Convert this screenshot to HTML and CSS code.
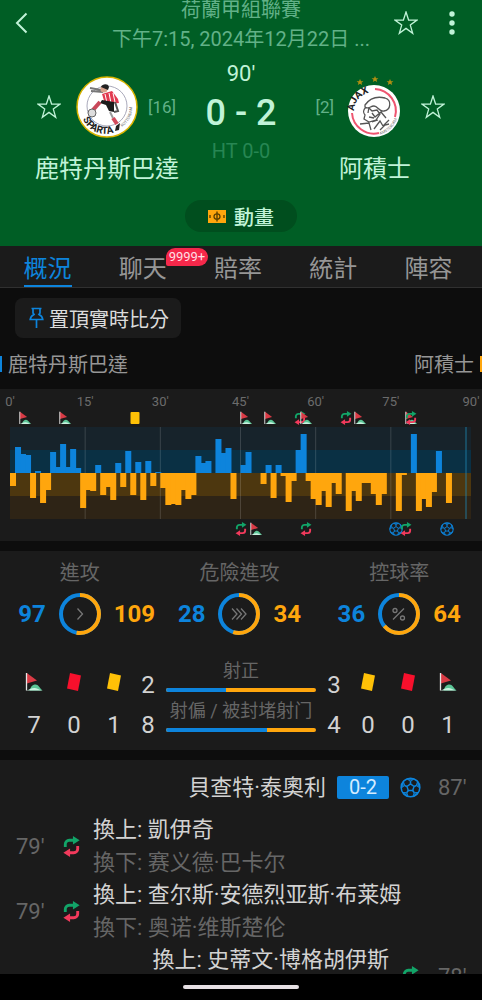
FILE: index.html
```html
<!DOCTYPE html>
<html lang="zh-Hant">
<head>
  <meta charset="UTF-8" />
  <meta name="viewport" content="width=device-width, initial-scale=1.0">
  <title>鹿特丹斯巴達 0 - 2 阿積士</title>
  <link rel="stylesheet" href="styles.css">
</head>
<body>

  <!-- shared icons -->
  <svg class="sprite" aria-hidden="true">
    <symbol id="star" viewBox="0 0 24 24">
      <path d="M12 1l2.600 8 8.400.1-6.700 5 2.400 8.200-6.700-4.900-6.700 4.900 2.400-8.200-6.700-5L9.400 9z" fill="none" stroke="currentColor" stroke-width="1.300"/>
    </symbol>
    <symbol id="corner" viewBox="0 0 18 20">
      <path d="M4.500 18.500C6 14 8 12.500 10.500 12.500c3 0 4 3.500 7 6z" fill="#5cc596"/>
      <path d="M1 18.500c3-.5 6-3 9-2.500s4 2 7.500 2.500z" fill="#c9f2e0"/>
      <path d="M1.800 1L12 8.500 1.800 11.500z" fill="#d93a45"/>
      <path d="M1.500 1v17.500" stroke="#e6e6e6" stroke-width="1.300"/>
    </symbol>
    <symbol id="subst" viewBox="0 0 20 22">
      <path d="M3.500 11.500V8.500a4 4 0 0 1 4-4h6" fill="none" stroke="#12a468" stroke-width="3"/>
      <path d="M11.500 0l7 4.500-7 4.500z" fill="#12a468"/>
      <path d="M16.500 10.500v3a4 4 0 0 1-4 4h-6" fill="none" stroke="#f23a5c" stroke-width="3"/>
      <path d="M8.500 13l-7 4.500 7 4.500z" fill="#f23a5c"/>
    </symbol>
    <symbol id="card" viewBox="0 0 16 20">
      <path d="M4 1l11 2.500-3 15.500L1 16.500z" fill="currentColor"/>
    </symbol>
    <symbol id="ball" viewBox="0 0 22 22">
      <circle cx="11" cy="11" r="9.800" fill="none" stroke="#0d84dc" stroke-width="1.600"/>
      <path d="M11 7.200l3.700 2.700-1.400 4.300H8.700L7.300 9.900z" fill="none" stroke="#0d84dc" stroke-width="1.500"/>
      <path d="M11 7.200V4.500M14.700 9.900l2.600-.9M13.300 14.200l1.700 2.300M8.700 14.200L7 16.500M7.300 9.900L4.700 9" stroke="#0d84dc" stroke-width="1.600"/>
      <path d="M7.500 2L11 4.700 14.500 2zM18.500 4.500l-1.400 4.300 3.500 2.700zM19.300 16.200l-4.400.2-1.300 4zM8.400 20.400l-1.300-4-4.400-.2zM1.400 11.500l3.500-2.700-1.400-4.300z" fill="#0d84dc" fill-opacity=".6" stroke="#0d84dc" stroke-width="1"/>
    </symbol>
  </svg>

  <header class="match-header">
    <div class="top-bar">
      <button class="icon-btn" aria-label="返回">
        <svg width="24" height="24" viewBox="0 0 24 24"><path d="M16.500 2.500L7 12l9.500 9.500" fill="none" stroke="currentColor" stroke-width="2"/></svg>
      </button>
      <div class="league">
        <div>荷蘭甲組聯賽</div>
        <div>下午7:15, 2024年12月22日 ...</div>
      </div>
      <div class="top-actions">
        <button class="icon-btn" aria-label="收藏"><svg width="24" height="24"><use href="#star"/></svg></button>
        <button class="icon-btn" aria-label="更多">
          <svg width="24" height="24" viewBox="0 0 24 24" fill="currentColor"><circle cx="12" cy="3" r="2.700"/><circle cx="12" cy="12" r="2.700"/><circle cx="12" cy="21" r="2.700"/></svg>
        </button>
      </div>
    </div>

    <div class="scoreboard">
      <div class="team">
        <div class="team-row">
          <button class="icon-btn" aria-label="收藏主隊"><svg width="24" height="24"><use href="#star"/></svg></button>
          <svg class="logo" viewBox="0 0 62 62">
            <circle cx="31" cy="31" r="30" fill="#fff" stroke="#d9b400" stroke-width="1.500"/>
            <circle cx="31" cy="30" r="20" fill="none" stroke="#aab" stroke-width="1"/>
            <path d="M25 14L14 12M27 16l-12-1" stroke="#777" stroke-width="2" fill="none"/>
            <circle cx="28" cy="13" r="3.500" fill="#d9a38c"/>
            <path d="M25 11c1-3 7-4 8 0l-1 3z" fill="#222"/>
            <path d="M26 18l10-3 6 8 1 4-14 1z" fill="#e23a50"/>
            <path d="M29 18l2 9M33 17l2 10M37 17l2 9" stroke="#fff" stroke-width="1"/>
            <path d="M26 24l12 2v10l-5-1-3-6-6-2z" fill="#1b1b1b"/>
            <path d="M24 26l-7 8" stroke="#c9485a" stroke-width="4"/>
            <path d="M39 26l3 9-4 1" fill="none" stroke="#555" stroke-width="2"/>
            <circle cx="16" cy="37" r="4" fill="#ddd" stroke="#666" stroke-width="1"/>
            <path d="M34 36l3 6" stroke="#999" stroke-width="2"/>
            <path d="M37 42l4 6" stroke="#d24a5c" stroke-width="4"/>
            <path d="M40 50l4-3-1 7-4 1z" fill="#222"/>
            <path id="sparta-arc" d="M7 43c6 14 22 19 36 11" fill="none"/>
            <path id="rotterdam-arc" d="M46 51c8-6 11-14 10-22" fill="none"/>
            <text class="crest-name"><textPath href="#sparta-arc">SPARTA</textPath></text>
            <text class="crest-small"><textPath href="#rotterdam-arc">ROTTERDAM</textPath></text>
          </svg>
          <span class="rank">[16]</span>
        </div>
        <div class="team-name">鹿特丹斯巴達</div>
      </div>

      <div class="score">
        <div class="minute">90'</div>
        <div class="goals">0 - 2</div>
        <div class="half">HT 0-0</div>
      </div>

      <div class="team">
        <div class="team-row">
          <span class="rank">[2]</span>
          <svg class="logo" viewBox="0 0 62 62">
            <g fill="#b08f12">
              <path d="M16 3l1 2.200 2.400.1-1.900 1.500.7 2.300-2.200-1.300-2.200 1.300.7-2.300-1.900-1.500 2.400-.1z"/>
              <path d="M31 0l1 2.200 2.400.1-1.900 1.500.7 2.300L31 4.800l-2.200 1.300.7-2.300-1.900-1.500 2.400-.1z"/>
              <path d="M46 3l1 2.200 2.400.1-1.900 1.500.7 2.300-2.200-1.300-2.200 1.300.7-2.300-1.900-1.500 2.400-.1z"/>
            </g>
            <circle cx="30" cy="35" r="26" fill="#fff"/>
            <path d="M31 13a22 22 0 0 1 20 28M35 57A22 22 0 0 1 8 37" fill="none" stroke="#ee5570" stroke-width="2"/>
            <path d="M21 29c5-7 12-9 20-7 7 2 6 12-1 13-5 1-6-5-10-5s-6 4-9 1zM22 31c-3 3-3 6-1 8l-1 4 5 3 7-2 4-6-3-4-5 1-3-3M25 31l-1 6M28 37l3 4 6-5 5 6M16 48l9-1 2 7M30 53l6-8 3 5 6-6M28 46l6-2M36 54l5-5 4-1M25 41l5 1" fill="none" stroke="#555" stroke-width="1.300"/>
            <path id="ajax-arc" d="M10 35c0-9 7-18 20-19" fill="none"/>
            <path id="amsterdam-arc" d="M36 59c9-3 15-9 17-17" fill="none"/>
            <text class="crest-name"><textPath href="#ajax-arc">AJAX</textPath></text>
            <text class="crest-small"><textPath href="#amsterdam-arc">AMSTERDAM</textPath></text>
          </svg>
          <button class="icon-btn" aria-label="收藏客隊"><svg width="24" height="24"><use href="#star"/></svg></button>
        </div>
        <div class="team-name">阿積士</div>
      </div>
    </div>

    <button class="live-btn">
      <svg width="18" height="13" viewBox="0 0 18 13">
        <rect width="18" height="13" fill="#ffa60d"/>
        <path d="M9 1.500v10M2 5v3M16 5v3" fill="none" stroke="#5a4000" stroke-width="1.400"/>
        <ellipse cx="9" cy="6.500" rx="3" ry="2.700" fill="none" stroke="#5a4000" stroke-width="1.300"/>
      </svg>
      動畫
    </button>
  </header>

  <nav class="tabs">
    <a href="#overview" class="tab active">概況</a>
    <a href="#chat" class="tab">聊天<span class="badge">9999+</span></a>
    <a href="#odds" class="tab">賠率</a>
    <a href="#stats" class="tab">統計</a>
    <a href="#lineup" class="tab">陣容</a>
  </nav>

  <main class="content" id="overview">
    <button class="pin-btn">
      <svg width="15" height="22" viewBox="0 0 15 22"><path d="M2.500 1.500h10M4 1.500v4.500l1 1.500c-2 1-3.500 2.500-3.800 5h12.600c-.3-2.500-1.800-4-3.800-5l1-1.500V1.500M7.500 12.500V21" fill="none" stroke="#0d84dc" stroke-width="1.700"/></svg>
      置頂實時比分
    </button>

    <div class="sides">
      <span class="home">鹿特丹斯巴達</span>
      <span class="away">阿積士</span>
    </div>

    <section class="panel timeline">
      <div class="ticks">
        <span style="left: 0%">0'</span>
        <span style="left: 16.3%">15'</span>
        <span style="left: 32.6%">30'</span>
        <span style="left: 50%">45'</span>
        <span style="left: 66.3%">60'</span>
        <span style="left: 82.6%">75'</span>
        <span style="left: 100%">90'</span>
      </div>
      <div class="markers">
        <svg style="left: 3.3%"><use href="#corner"/></svg>
        <svg style="left: 11.9%"><use href="#corner"/></svg>
        <i class="mini-card" style="left: 27.2%"></i>
        <svg style="left: 51.2%"><use href="#corner"/></svg>
        <svg style="left: 56.5%"><use href="#corner"/></svg>
        <svg style="left: 63%"><use href="#subst"/></svg>
        <svg style="left: 64.2%"><use href="#corner"/></svg>
        <svg style="left: 72.9%"><use href="#subst"/></svg>
        <svg style="left: 76%"><use href="#corner"/></svg>
        <svg style="left: 87%"><use href="#corner"/></svg>
        <svg style="left: 87%"><use href="#subst"/></svg>
      </div>
      <svg class="chart" id="chart" viewBox="0 0 460 92" preserveAspectRatio="none">
        <rect width="460" height="23" fill="#17232b"/>
        <rect y="23" width="460" height="23" fill="#0a3044"/>
        <rect y="46" width="460" height="23" fill="#4d370f"/>
        <rect y="69" width="460" height="23" fill="#2e2416"/>
        <path d="M75 0v92M150 0v92M230 0v92M305 0v92M380 0v92" stroke="#fff" stroke-opacity=".15"/>
        <path d="M455 0v92" stroke="#1d86b4" stroke-opacity=".4" stroke-width="2"/>
      </svg>
      <div class="markers">
        <svg style="left: 50%"><use href="#subst"/></svg>
        <svg style="left: 53.3%"><use href="#corner"/></svg>
        <svg style="left: 64.2%"><use href="#subst"/></svg>
        <svg style="left: 83.8%"><use href="#ball"/></svg>
        <svg style="left: 86%"><use href="#subst"/></svg>
        <svg style="left: 94.7%"><use href="#ball"/></svg>
      </div>
    </section>

    <section class="panel stats">
      <div class="rings">
        <div class="ring-stat">
          <h3>進攻</h3>
          <b class="home-val">97</b>
          <svg class="ring" viewBox="0 0 42 42">
            <circle cx="21" cy="21" r="19" class="ring-home"/>
            <circle cx="21" cy="21" r="19" class="ring-away" pathLength="100" stroke-dasharray="53 47" transform="rotate(-90 21 21)"/>
            <path d="M18.500 15.500l5 5.500-5 5.500" class="ring-icon"/>
          </svg>
          <b class="away-val">109</b>
        </div>
        <div class="ring-stat">
          <h3>危險進攻</h3>
          <b class="home-val">28</b>
          <svg class="ring" viewBox="0 0 42 42">
            <circle cx="21" cy="21" r="19" class="ring-home"/>
            <circle cx="21" cy="21" r="19" class="ring-away" pathLength="100" stroke-dasharray="55 45" transform="rotate(-90 21 21)"/>
            <path d="M14 15.500l5 5.500-5 5.500M18.500 15.500l5 5.500-5 5.500M23 15.500l5 5.500-5 5.500" class="ring-icon"/>
          </svg>
          <b class="away-val">34</b>
        </div>
        <div class="ring-stat">
          <h3>控球率</h3>
          <b class="home-val">36</b>
          <svg class="ring" viewBox="0 0 42 42">
            <circle cx="21" cy="21" r="19" class="ring-home"/>
            <circle cx="21" cy="21" r="19" class="ring-away" pathLength="100" stroke-dasharray="64 36" transform="rotate(-90 21 21)"/>
            <path d="M26 15.500l-11 11" class="ring-icon"/>
            <circle cx="17" cy="17.500" r="2" class="ring-icon"/>
            <circle cx="24.500" cy="25" r="2" class="ring-icon"/>
          </svg>
          <b class="away-val">64</b>
        </div>
      </div>

      <div class="counts">
        <svg class="count-icon"><use href="#corner"/></svg>
        <svg class="count-icon red"><use href="#card"/></svg>
        <svg class="count-icon yellow"><use href="#card"/></svg>
        <span>2</span>
        <div class="shot">
          <div>射正</div>
          <div class="bar"><i style="width: 40%"></i></div>
        </div>
        <span>3</span>
        <svg class="count-icon yellow"><use href="#card"/></svg>
        <svg class="count-icon red"><use href="#card"/></svg>
        <svg class="count-icon"><use href="#corner"/></svg>

        <span>7</span>
        <span>0</span>
        <span>1</span>
        <span>8</span>
        <div class="shot">
          <div>射偏 / 被封堵射门</div>
          <div class="bar"><i style="width: 67%"></i></div>
        </div>
        <span>4</span>
        <span>0</span>
        <span>0</span>
        <span>1</span>
      </div>
    </section>

    <ul class="panel events">
      <li class="event goal away">
        <span class="names">貝查特·泰奧利</span>
        <span class="goal-score">0-2</span>
        <svg class="event-icon"><use href="#ball"/></svg>
        <time>87'</time>
      </li>
      <li class="event">
        <time>79'</time>
        <svg class="event-icon"><use href="#subst"/></svg>
        <div class="names"><span>換上: 凱伊奇</span><span class="off">換下: 赛义德·巴卡尔</span></div>
      </li>
      <li class="event">
        <time>79'</time>
        <svg class="event-icon"><use href="#subst"/></svg>
        <div class="names"><span>換上: 查尔斯·安德烈亚斯·布莱姆</span><span class="off">換下: 奥诺·维斯楚伦</span></div>
      </li>
      <li class="event away">
        <div class="names"><span>換上: 史蒂文·博格胡伊斯</span></div>
        <svg class="event-icon"><use href="#subst"/></svg>
        <time>78'</time>
      </li>
    </ul>
  </main>

  <footer class="system-bar"><span class="handle"></span></footer>

  <script src="chart.js"></script>
</body>
</html>
```

FILE: styles.css
```css
* {
  box-sizing: border-box;
}

body {
  margin: 0;
  height: 100vh;
  display: flex;
  flex-direction: column;
  overflow: hidden;
  background: #0d0d0d;
  color: #d2d2d2;
  font-family: Roboto, "Noto Sans CJK TC", sans-serif;
}

button {
  border: none;
  background: none;
  padding: 0;
  color: inherit;
  font: inherit;
  cursor: pointer;
}

svg {
  display: block;
}

.sprite {
  position: absolute;
  width: 0;
  height: 0;
}

/* header */
.match-header {
  flex: none;
  height: 246px;
  display: flex;
  flex-direction: column;
  align-items: center;
  background: #005e25;
  color: #c0f3d8;
}

.top-bar {
  width: 100%;
  height: 54px;
  padding: 0 18px 0 10px;
  display: grid;
  grid-template-columns: 80px 1fr 72px;
  align-items: start;
}

.top-bar .icon-btn {
  margin-top: 11px;
}

.icon-btn {
  width: 24px;
  height: 24px;
}

.league {
  color: #62b188;
  font-size: 20px;
  line-height: 29px;
  margin-top: -4px;
  text-align: center;
  white-space: nowrap;
}

.top-actions {
  display: flex;
  justify-content: flex-end;
  gap: 22px;
}

.scoreboard {
  width: 100%;
  padding: 0 34px;
  display: grid;
  grid-template-columns: 146px 1fr 146px;
}

.team {
  padding-top: 22px;
  text-align: center;
}

.team-row {
  display: grid;
  grid-template-columns: 1fr 62px 1fr;
  align-items: center;
  margin: 0 3px;
}

.team-row .icon-btn:last-child {
  justify-self: end;
}

.logo {
  width: 62px;
  height: 62px;
}

.crest-name {
  font-size: 10px;
  font-weight: bold;
  fill: #222;
}

.crest-small {
  font-size: 4px;
  fill: #777;
}

.rank {
  justify-self: end;
  margin-right: 10px;
  color: #62b188;
  font-size: 17px;
}

.rank:last-child {
  justify-self: start;
  margin: 0 0 0 10px;
}

.team-name {
  margin-top: 13px;
  font-size: 24px;
  line-height: 36px;
  white-space: nowrap;
}

.score {
  padding-top: 6px;
  text-align: center;
  white-space: nowrap;
}

.minute {
  font-size: 22px;
  line-height: 28px;
}

.goals {
  font-size: 36px;
  font-weight: 500;
  line-height: 50px;
}

.half {
  color: #278653;
  font-size: 20px;
  line-height: 26px;
}

.live-btn {
  display: flex;
  align-items: center;
  gap: 8px;
  height: 32px;
  margin-top: 13px;
  padding: 0 23px;
  border-radius: 16px;
  background: #004e1e;
  font-size: 20px;
  font-weight: 500;
}

/* tabs */
.tabs {
  flex: none;
  display: flex;
  height: 42px;
  padding-right: 6px;
  background: #1b1b1b;
  border-bottom: 1px solid #303030;
}

.tab {
  position: relative;
  flex: 1;
  color: #969696;
  font-size: 24px;
  line-height: 46px;
  text-align: center;
  text-decoration: none;
}

.tab.active {
  color: #0d84dc;
}

.tab.active::after {
  content: "";
  position: absolute;
  left: 50%;
  bottom: 0;
  width: 48px;
  height: 2px;
  margin-left: -24px;
  background: #0d84dc;
}

.badge {
  position: absolute;
  left: 74%;
  top: 2px;
  padding: 0 3px;
  border-radius: 9px 9px 9px 2px;
  background: #f5284a;
  color: #ffdfe3;
  font-size: 13px;
  line-height: 18px;
}

/* content */
.content {
  flex: 1;
  min-height: 0;
  overflow: hidden;
}

.panel {
  background: #1b1b1b;
  margin: 0 0 10px;
}

.pin-btn {
  display: flex;
  align-items: center;
  gap: 5px;
  height: 40px;
  margin: 10px 15px 0;
  padding: 0 12px 0 14px;
  border-radius: 8px;
  background: #1b1b1b;
  color: #dcdcdc;
  font-size: 20px;
}

.sides {
  display: flex;
  justify-content: space-between;
  align-items: center;
  height: 51px;
  color: #969696;
  font-size: 20px;
}

.home,
.away {
  display: flex;
  align-items: center;
  gap: 6px;
}

.home::before,
.sides .away::after {
  content: "";
  width: 2px;
  height: 16px;
  background: #0d84dc;
}

.sides .away::after {
  background: #ffa60d;
}

/* pressure chart */
.timeline {
  height: 152px;
  padding: 4px 11px 0 10px;
}

.ticks,
.markers {
  position: relative;
}

.ticks {
  height: 18px;
  color: #6c6c6c;
  font-size: 13px;
  line-height: 18px;
}

.ticks span,
.markers > * {
  position: absolute;
  transform: translateX(-50%);
}

.markers {
  height: 16px;
}

.markers svg {
  top: 0;
  width: 14px;
  height: 14px;
}

.markers .mini-card {
  top: 1px;
  width: 9px;
  height: 12px;
  border-radius: 1px;
  background: #ffc107;
}

.chart {
  width: 100%;
  height: 92px;
}

.chart + .markers svg {
  top: 3px;
}

/* stats */
.stats {
  height: 199px;
}

.rings {
  display: grid;
  grid-template-columns: repeat(3, 1fr);
  padding: 7px 3px 0 0;
}

.ring-stat {
  display: grid;
  grid-template-columns: 1fr 42px 1fr;
  column-gap: 13px;
  align-items: center;
}

.ring-stat h3 {
  grid-column: 1 / -1;
  margin: 0;
  color: #666;
  font-size: 20px;
  font-weight: normal;
  line-height: 30px;
  text-align: center;
}

.ring-stat b {
  font-size: 24px;
}

.home-val {
  color: #0d84dc;
  text-align: right;
}

.away-val {
  color: #ffa60d;
}

.ring {
  width: 42px;
  height: 42px;
  margin: 5px 0;
}

.ring-home,
.ring-away {
  fill: none;
  stroke: #0d84dc;
  stroke-width: 4;
}

.ring-away {
  stroke: #ffa60d;
}

.ring-icon {
  fill: none;
  stroke: #777;
  stroke-width: 1.3;
}

.counts {
  display: grid;
  grid-template-columns: repeat(3, 40px) 28px 1fr 28px repeat(3, 40px);
  grid-auto-rows: 40px;
  align-items: center;
  justify-items: center;
  margin-top: 25px;
  padding: 0 14px;
  font-size: 24px;
}

.count-icon {
  width: 18px;
  height: 20px;
  margin-bottom: 6px;
}

.red {
  color: #f7102c;
}

.yellow {
  color: #ffc107;
}

.shot {
  justify-self: stretch;
  align-self: start;
  margin-top: -8px;
  padding: 0 4px;
  color: #666;
  font-size: 18px;
  line-height: 28px;
  text-align: center;
  white-space: nowrap;
}

.bar {
  height: 4px;
  margin-top: 3px;
  border-radius: 2px;
  overflow: hidden;
  background: #ffa60d;
}

.bar i {
  display: block;
  height: 100%;
  background: #0d84dc;
}

/* events */
.events {
  list-style: none;
  padding: 1px 0 0;
  font-size: 22px;
  line-height: 32px;
}

.event {
  display: flex;
  align-items: center;
  gap: 11px;
  min-height: 65px;
  padding: 0 16px;
}

.event.away {
  justify-content: flex-end;
}

.event.goal {
  min-height: 53px;
}

.event time {
  color: #666;
  width: 28px;
}

.event time:first-child {
  margin-right: 6px;
}

.event time:last-child {
  margin-left: 6px;
}

.event-icon {
  width: 21px;
  height: 21px;
}

.event .names {
  white-space: nowrap;
}

.event div.names {
  display: flex;
  flex-direction: column;
  gap: 1px;
  align-self: flex-start;
}

.off {
  color: #666;
}

.goal-score {
  padding: 0 12px;
  border-radius: 2px;
  background: #0d84dc;
  color: #d5ecff;
  font-size: 20px;
  line-height: 23px;
}

/* phone gesture bar */
.system-bar {
  flex: none;
  display: flex;
  align-items: center;
  justify-content: center;
  height: 26px;
  background: #000;
}

.handle {
  width: 24%;
  height: 4px;
  border-radius: 2px;
  background: #e6e0e4;
}
```

FILE: chart.js
```js
// one value per minute, above zero = home pressure, below zero = away pressure
const pressure = [
  -13, 26, 19, 18, -25, 2, -30, -17, 21, 6, 29, 6, 24, 5, -35,
  -17, -18, 8, -22, -14, -27, 10, -14, 22, -22, 11, -27, 12, -13, 1,
  -15, -32, -31, -32, -17, -26, -22, 17, 10, 12, 0, 34, 20, 25, -26, 0,
  8, 21, 0, 0, -11, 8, -25, 8, -3, -29, -8, 23, 39, -8,
  -26, -32, -18, -34, -10, -21, 0, -38, -18, -28, -10, -10, -21, -32, -21,
  0, 0, -38, -2, 0, 39, -38, -26, -34, -19, 22, 0, -30
];

const chart = document.getElementById('chart');

pressure.forEach((value, minute) => {
  if (!value) return;
  const bar = document.createElementNS('http://www.w3.org/2000/svg', 'rect');
  bar.setAttribute('x', minute * 5);
  bar.setAttribute('y', value > 0 ? 46 - value : 46);
  bar.setAttribute('width', 6);
  bar.setAttribute('height', Math.abs(value));
  bar.setAttribute('fill', value > 0 ? '#0d84dc' : '#ffa60d');
  chart.appendChild(bar);
});
```
